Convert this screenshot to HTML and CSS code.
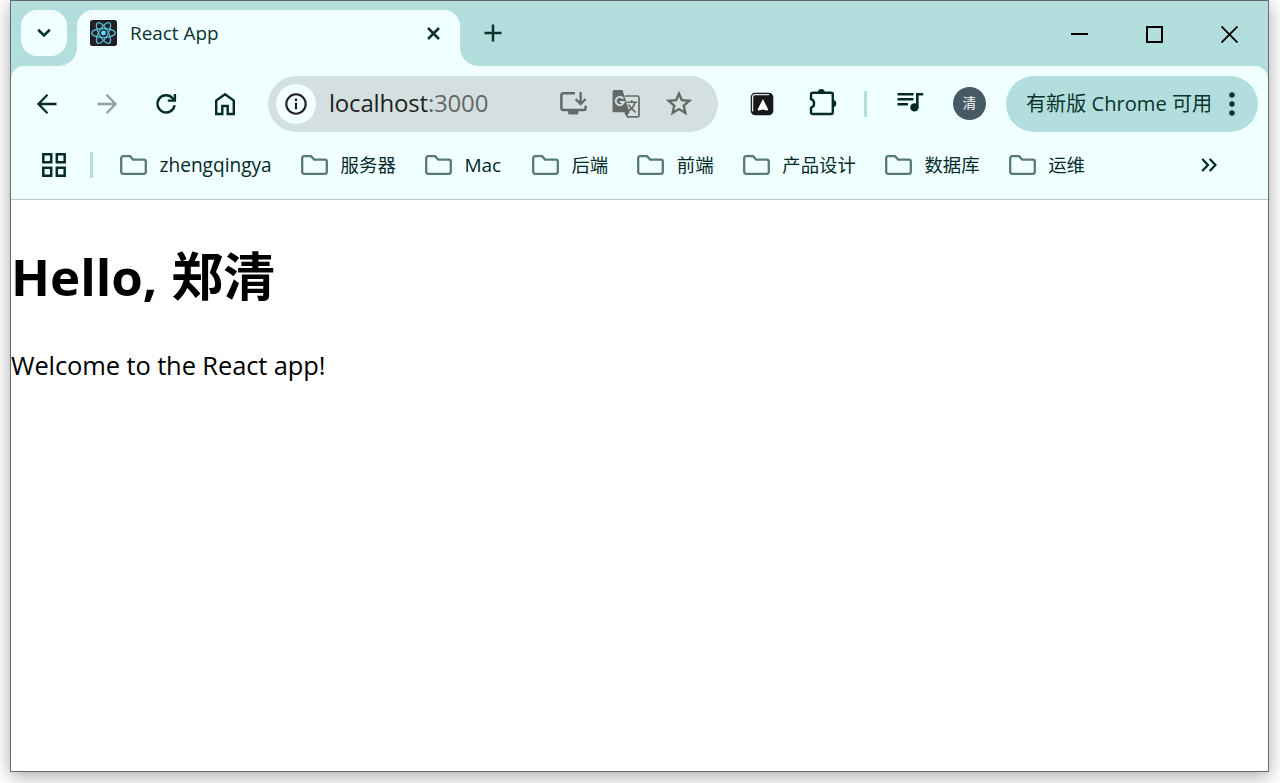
FILE: index.html
```html
<!DOCTYPE html>
<html lang="zh-CN">
<head>
<meta charset="utf-8">
<title>React App</title>
<link rel="stylesheet" href="styles.css">
</head>
<body>
<svg class="defs" width="0" height="0">
  <symbol id="folder" viewBox="0 0 27 20"><path d="M3.2 1.2H10L13.2 4.6H23.8Q25.8 4.6 25.8 6.6V16.8Q25.8 18.8 23.8 18.8H3.2Q1.2 18.8 1.2 16.8V3.2Q1.2 1.2 3.2 1.2Z" fill="none" stroke="#587b76" stroke-width="2.3"/></symbol>
</svg>
<div class="window">
  <header class="tabstrip">
    <button class="tab-search"><svg width="14" height="10" viewBox="0 0 14 10"><path d="M1.2 1.8L7 7.4L12.8 1.8" fill="none" stroke="#0a322f" stroke-width="2.7"/></svg></button>
    <div class="tab">
      <svg class="favicon" width="27" height="26" viewBox="0 0 27 26">
        <rect width="27" height="26" rx="2.5" fill="#202124"/>
        <g fill="none" stroke="#58c0dc" stroke-width="1.25" transform="translate(13.5 13)">
          <ellipse rx="11.8" ry="4.5"/><ellipse rx="11.8" ry="4.5" transform="rotate(60)"/><ellipse rx="11.8" ry="4.5" transform="rotate(120)"/>
          <circle r="2.4" fill="#61dafb" stroke="none"/>
        </g>
      </svg>
      <span class="tab-title">React App</span>
      <svg class="tab-close" width="13" height="13" viewBox="0 0 13 13"><path d="M1 1L12 12M12 1L1 12" stroke="#0a322f" stroke-width="2.5"/></svg>
    </div>
    <svg class="new-tab" width="18" height="18" viewBox="0 0 18 18"><path d="M9 .5V17.5M.5 9H17.5" stroke="#0a322f" stroke-width="2.5"/></svg>
    <div class="controls">
      <svg width="17" height="17" viewBox="0 0 17 17"><path d="M0 8H17" stroke="#000" stroke-width="2"/></svg>
      <svg width="17" height="17" viewBox="0 0 17 17"><rect x="1" y="1" width="15" height="15" fill="none" stroke="#000" stroke-width="2"/></svg>
      <svg width="17" height="17" viewBox="0 0 17 17"><path d="M.5 .5L16.5 16.5M16.5 .5L.5 16.5" stroke="#000" stroke-width="1.9"/></svg>
    </div>
  </header>
  <div class="chrome">
    <div class="toolbar">
      <nav class="nav">
        <svg width="22" height="22" viewBox="0 0 22 22"><path d="M20.5 11H3M11.5 1.8L2.5 11L11.5 20.2" fill="none" stroke="#032b29" stroke-width="2.3"/></svg>
        <svg width="22" height="22" viewBox="0 0 22 22"><path d="M1.5 11H19M10.5 1.8L19.5 11L10.5 20.2" fill="none" stroke="#8aa5a3" stroke-width="2.3"/></svg>
        <svg width="22" height="22" viewBox="0 0 22 22"><path d="M19.6 12.2A8.6 8.6 0 1 1 17.6 5.2L19 7" fill="none" stroke="#032b29" stroke-width="2.4"/><path d="M19.9 1V7.6H12.8" fill="none" stroke="#032b29" stroke-width="2.4"/></svg>
        <svg width="22" height="24" viewBox="0 0 22 24"><path d="M2.2 22V8.6L11 2.2L19.8 8.6V22H13.7V14H8.3V22Z" fill="none" stroke="#032b29" stroke-width="2.4"/></svg>
      </nav>
      <div class="omnibox">
        <span class="site-info"><svg width="22" height="22" viewBox="0 0 22 22"><circle cx="11" cy="11" r="9.7" fill="none" stroke="#1f1f1f" stroke-width="2.1"/><path d="M11 9.7V16.2M11 5.6V8" stroke="#1f1f1f" stroke-width="2.2"/></svg></span>
        <span class="url">localhost<span class="port">:3000</span></span>
        <div class="page-actions">
          <svg width="28" height="25" viewBox="0 0 28 25"><path d="M15 2.2H3.4Q1.4 2.2 1.4 4.2V17.2Q1.4 19 3.4 19H23.6Q25.6 19 25.6 17V14.8" fill="none" stroke="#656868" stroke-width="2.5"/><path d="M8.2 19H18.2V23.4H8.2Z" fill="#656868"/><path d="M20.6 1V13M15.6 8L20.6 13L25.6 8" fill="none" stroke="#656868" stroke-width="2.3"/></svg>
          <svg width="28" height="28" viewBox="0 0 28 28"><path d="M13 6H25.4Q27 6 27 7.6V25Q27 26.8 25.4 26.8H15.6L13 22.5" fill="none" stroke="#656868" stroke-width="1.7"/><path d="M2.4 0H10.5L17.6 22.3L14.6 26.2L12.8 22.3H2.4Q.5 22.3 .5 20.4V2Q.5 0 2.4 0Z" fill="#656868"/><path d="M11.2 8.7A4.1 4.1 0 1 0 11.8 12H7.9" fill="none" stroke="#d4e0e0" stroke-width="1.9"/><path d="M15 12.3H25M19.8 10V12.3M23 12.3C22 16.5 19.6 19 16.6 20.8M16.6 14.6C18.4 18 20.5 20 23.7 22.3" fill="none" stroke="#656868" stroke-width="1.6"/></svg>
          <svg width="26" height="25" viewBox="0 0 26 25"><path d="M13 2.7L15.9 9.1L23.3 9.8L17.7 14.6L19.4 22L13 18.1L6.6 22L8.3 14.6L2.7 9.8L10.1 9.1Z" fill="none" stroke="#656868" stroke-width="2.4"/></svg>
        </div>
      </div>
      <svg class="extension" width="24" height="24" viewBox="0 0 24 24"><rect x=".7" y=".7" width="22.6" height="22.6" rx="4.5" fill="#17181a"/><path d="M2.6 19.5V5.4Q2.6 2.7 5.2 2.7H19" fill="none" stroke="#e4e8e8" stroke-width="1.3"/><path d="M12.9 7L18.1 17.2Q18 19 16 18.3L12.9 17.4L9.8 18.3Q7.8 19 7.7 17.2Z" fill="#fff"/></svg>
      <svg class="puzzle" width="28" height="28" viewBox="0 0 28 28"><path d="M3.7 4.7H22Q23.8 4.7 23.8 6.5V24.2Q23.8 26 22 26H3.7Q2 26 2 24.2V19.6A4.4 4.4 0 0 0 2 11.2V6.4Q2 4.7 3.7 4.7Z" fill="none" stroke="#032b29" stroke-width="2.4"/><path d="M8.8 4.5A3.5 3.5 0 0 1 15.8 4.5ZM23.8 12A3.5 3.5 0 0 1 23.8 19Z" fill="#032b29"/></svg>
      <span class="divider"></span>
      <svg class="media" width="27" height="20" viewBox="0 0 27 20"><path d="M.5 2.2H16.5M.5 7.2H16.5M.5 12.3H11" stroke="#032b29" stroke-width="2.4"/><path d="M20.3 15.5V2.2H26.2" fill="none" stroke="#032b29" stroke-width="2.6"/><circle cx="17.4" cy="15.4" r="4.2" fill="#032b29"/></svg>
      <span class="avatar">清</span>
      <div class="update"><span class="update-label">有新版 Chrome 可用</span><svg width="6" height="24" viewBox="0 0 6 24"><g fill="#0a322f"><circle cx="3" cy="3" r="2.7"/><circle cx="3" cy="12" r="2.7"/><circle cx="3" cy="21" r="2.7"/></g></svg></div>
    </div>
    <div class="bookmarks">
      <svg class="apps" width="24" height="24" viewBox="0 0 24 24"><path d="M1.3 1.3H9.2V9.2H1.3ZM14.8 1.3H22.7V9.2H14.8ZM1.3 14.8H9.2V22.7H1.3ZM14.8 14.8H22.7V22.7H14.8Z" fill="none" stroke="#032b29" stroke-width="2.5"/></svg>
      <span class="divider"></span>
      <div class="folders">
        <span class="folder wide"><svg><use href="#folder"/></svg>zhengqingya</span>
        <span class="folder"><svg><use href="#folder"/></svg>服务器</span>
        <span class="folder short"><svg><use href="#folder"/></svg>Mac</span>
        <span class="folder"><svg><use href="#folder"/></svg>后端</span>
        <span class="folder"><svg><use href="#folder"/></svg>前端</span>
        <span class="folder"><svg><use href="#folder"/></svg>产品设计</span>
        <span class="folder"><svg><use href="#folder"/></svg>数据库</span>
        <span class="folder"><svg><use href="#folder"/></svg>运维</span>
      </div>
      <svg class="more" width="16" height="14" viewBox="0 0 16 14"><path d="M1.2 1L7 7L1.2 13M8.7 1L14.5 7L8.7 13" fill="none" stroke="#032b29" stroke-width="2.3"/></svg>
    </div>
  </div>
  <main class="page">
    <h1>Hello, <span class="name">郑清</span></h1>
    <p>Welcome to the React app!</p>
  </main>
</div>
</body>
</html>
```
FILE: styles.css
```css
* { box-sizing: border-box; }
body { margin: 0; height: 783px; background: #fff; overflow: hidden; font-family: "Open Sans", "Noto Sans CJK SC", sans-serif; }
svg { display: block; flex: none; }
.defs { position: absolute; }
.window { width: 1259px; height: 772px; margin-left: 10px; border: 1px solid #666b6b; background: #fff; box-shadow: 0 4px 17px rgba(0,0,0,.34); }
.tabstrip { height: 65px; background: #b2dfdd; display: flex; align-items: flex-start; padding: 9px 30px 0 10px; }
.tab-search { width: 46px; height: 46px; padding: 0; border: 0; border-radius: 16px; background: #f0ffff; display: flex; align-items: center; justify-content: center; }
.tab { position: relative; width: 383px; height: 56px; margin-left: 10px; padding: 0 20px 10px 13px; background: #f0ffff; border-radius: 16px 16px 0 0; display: flex; align-items: center; }
.tab::before, .tab::after { content: ""; position: absolute; bottom: 0; width: 18px; height: 18px; }
.tab::before { right: 100%; background: radial-gradient(circle at 0 0, transparent 17.5px, #f0ffff 18px); }
.tab::after { left: 100%; background: radial-gradient(circle at 100% 0, transparent 17.5px, #f0ffff 18px); }
.tab-title { margin-left: 13px; font-size: 18.9px; line-height: 26px; color: #0a322f; white-space: nowrap; }
.tab-close { margin-left: auto; }
.new-tab { margin: 14px 0 0 24px; }
.controls { margin: 16px 0 0 auto; display: flex; gap: 58px; }
.chrome { height: 134px; border-bottom: 1px solid #b9c9c9; background: #b2dfdd; }
.toolbar { height: 75px; background: #f0ffff; border-radius: 13px 13px 0 0; display: flex; align-items: center; padding: 0 10px 0 25.3px; }
.nav { display: flex; align-items: center; gap: 37.4px; }
.omnibox { width: 450px; height: 56px; margin-left: 31.5px; padding: 0 26px 0 8px; border-radius: 28px; background: #d4e0e0; display: flex; align-items: center; }
.site-info { width: 40px; height: 40px; border-radius: 50%; background: #f0ffff; display: flex; align-items: center; justify-content: center; }
.url { margin-left: 13px; padding-bottom: 1px; font-size: 24px; line-height: 34px; letter-spacing: -.18px; color: #1f1f1f; }
.port { color: #656868; }
.page-actions { margin-left: auto; display: flex; align-items: center; gap: 24.5px; }
.page-actions svg:nth-child(2) { margin-right: 1px; }
.extension { margin-left: 32px; }
.puzzle { margin: -3px 0 0 35px; }
.divider { width: 3px; height: 26px; border-radius: 1px; background: #b2dfdd; }
.toolbar .divider { margin-left: 27px; }
.media { margin: -3px 0 0 30.5px; }
.avatar { width: 33px; height: 33px; margin-left: 28.5px; border-radius: 50%; background: #455a64; color: #fff; font-size: 13.5px; line-height: 32px; text-align: center; }
.update { width: 252px; height: 56px; margin-left: auto; padding: 0 23px 0 20px; border-radius: 28px; background: #b2dfdd; color: #0a322f; display: flex; align-items: center; justify-content: space-between; }
.update-label { padding-top: 1px; font-size: 20.1px; line-height: 28px; white-space: nowrap; }
.bookmarks { height: 58px; background: #f0ffff; display: flex; align-items: center; padding: 0 51px 10px 31px; }
.bookmarks .divider { margin-left: 24px; }
.folders { margin-left: 27px; display: flex; gap: 29.1px; }
.folder { display: flex; align-items: center; gap: 12.5px; font-size: 18.4px; line-height: 26px; color: #032b29; white-space: nowrap; }
.folder svg { width: 27px; height: 20px; }
.folder.wide { width: 152px; font-size: 19.1px; }
.folder.short { width: 78px; font-size: 19px; }
.more { margin-left: auto; }
.page h1 { margin: 42px 0 0; font-size: 51px; line-height: 68px; font-weight: 700; color: #000; }
.name { display: inline-block; margin-left: .5px; font-size: 52px; line-height: 60px; }
.page p { margin: 37px 0 0; font-size: 25.5px; line-height: 36px; letter-spacing: -.12px; color: #000; }
```
